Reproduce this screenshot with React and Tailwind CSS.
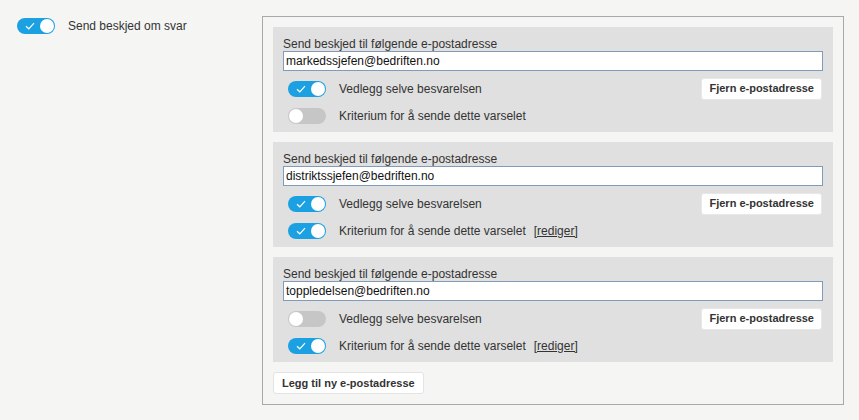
import React, { useState } from 'react';

function Toggle({ on, onChange }) {
  return (
    <button
      type="button"
      onClick={onChange}
      className={`relative w-[38px] h-[16px] rounded-full flex-shrink-0 ${on ? 'bg-[#1ba1e2]' : 'bg-[#c6c6c6]'}`}
    >
      {on && (
        <svg className="absolute left-[8px] top-[4px]" width="10" height="8" viewBox="0 0 10 8">
          <path d="M1 4.2 L3.8 6.8 L9 1.2" fill="none" stroke="#fff" strokeWidth="1.2" />
        </svg>
      )}
      <span
        className={`absolute top-[1px] w-[14px] h-[14px] rounded-full bg-white ${on ? 'right-[1px]' : 'left-[1px]'}`}
      ></span>
    </button>
  );
}

const initial = [
  { email: 'markedssjefen@bedriften.no', attach: true, criteria: false },
  { email: 'distriktssjefen@bedriften.no', attach: true, criteria: true },
  { email: 'toppledelsen@bedriften.no', attach: false, criteria: true },
];

export default function App() {
  const [notify, setNotify] = useState(true);
  const [rows, setRows] = useState(initial);

  const update = (i, key) => {
    setRows(rows.map((r, j) => (j === i ? { ...r, [key]: !r[key] } : r)));
  };

  return (
    <div className="w-[859px] h-[420px] bg-[#f5f5f4] text-[#333] text-[12px] font-['Liberation_Sans',Arial,sans-serif] flex items-start pt-[16px]">
      {/* Left toggle */}
      <div className="w-[262px] flex items-center pl-[17px] pt-[2px]">
        <Toggle on={notify} onChange={() => setNotify(!notify)} />
        <span className="ml-[13px] leading-[14px]">Send beskjed om svar</span>
      </div>

      {/* Recipients box */}
      <div className="w-[582px] border border-[#a9a9a9] p-[10px]">
        <div className="flex flex-col gap-[10px]">
          {rows.map((r, i) => (
            <div key={i} className="bg-[#e0e0e0] pt-[10px] px-[10px] pb-[3px]">
              <div className="leading-[14px] h-[14px]">Send beskjed til følgende e-postadresse</div>
              <input
                className="w-full h-[20px] bg-white border border-[#7f9db9] px-[2px] text-[12px] text-[#111] outline-none"
                defaultValue={r.email}
              />
              <div className="mt-[4px] h-[27px] flex items-center justify-between pl-[5px]">
                <div className="flex items-center">
                  <Toggle on={r.attach} onChange={() => update(i, 'attach')} />
                  <span className="ml-[13px]">Vedlegg selve besvarelsen</span>
                </div>
                <button className="h-[22px] px-[7px] mr-[1px] bg-white rounded-[3px] border border-[#e8e8e8] font-bold text-[11px] text-[#333]">
                  Fjern e-postadresse
                </button>
              </div>
              <div className="h-[27px] flex items-center pl-[5px]">
                <Toggle on={r.criteria} onChange={() => update(i, 'criteria')} />
                <span className="ml-[13px]">Kriterium for å sende dette varselet</span>
                {r.criteria && <a className="ml-[8px] underline cursor-pointer">[rediger]</a>}
              </div>
            </div>
          ))}
        </div>
        <button className="mt-[10px] h-[22px] px-[8px] bg-white rounded-[3px] border border-[#e3e3e3] font-bold text-[11px] text-[#333]">
          Legg til ny e-postadresse
        </button>
      </div>
    </div>
  );
}
